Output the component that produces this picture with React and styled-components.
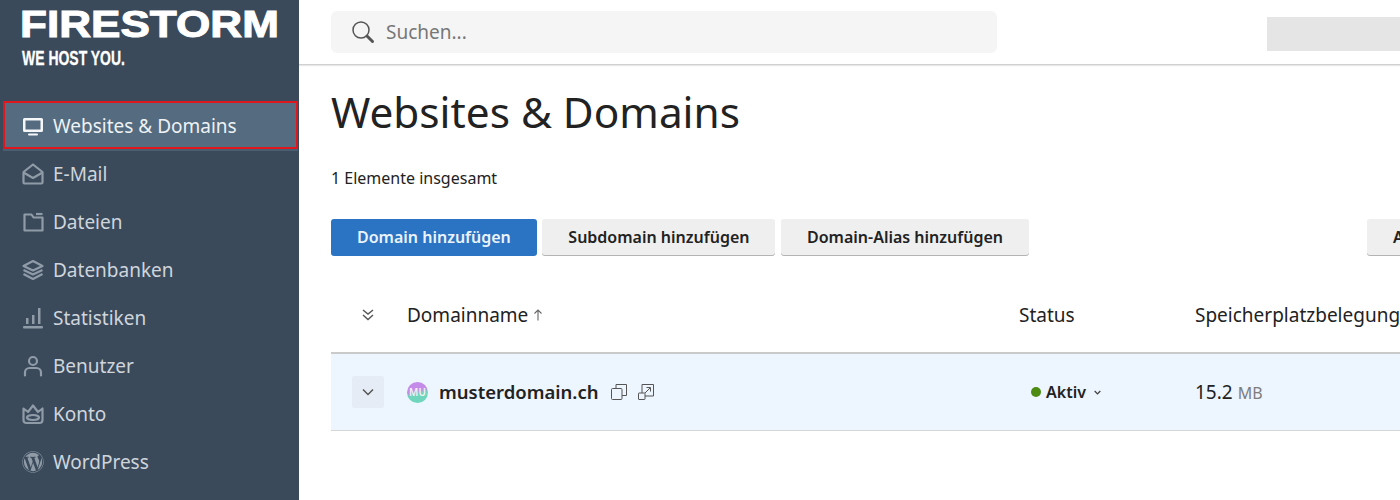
import React from 'react';
import styled, { createGlobalStyle } from 'styled-components';
import { FaWordpress } from 'react-icons/fa';

const GlobalStyle = createGlobalStyle`
  html, body {
    margin: 0;
    padding: 0;
    background: #fff;
  }
  body {
    font-family: 'Noto Sans', 'Open Sans', sans-serif;
    color: #222;
  }
`;

const Page = styled.div`
  display: flex;
  width: 1400px;
  height: 500px;
  overflow: hidden;
`;

const Sidebar = styled.aside`
  flex: 0 0 299px;
  background: #3a4a5b;
`;

const Logo = styled.div`
  height: 101px;
  box-sizing: border-box;
  padding: 4px 0 0 20px;
  color: #fff;
`;

const LogoName = styled.div`
  font-family: 'Liberation Sans', sans-serif;
  font-weight: 700;
  font-size: 36px;
  line-height: 41px;
  white-space: nowrap;
  transform: scaleX(1.225);
  transform-origin: left center;
  -webkit-text-stroke: 1px #fff;
`;

const LogoClaim = styled.div`
  font-family: 'Liberation Sans', sans-serif;
  font-weight: 700;
  font-size: 21px;
  line-height: 24px;
  margin: 1px 0 0 2px;
  white-space: nowrap;
  transform: scaleX(0.665);
  transform-origin: left center;
  -webkit-text-stroke: 0.3px #fff;
`;

const Nav = styled.nav`
  display: flex;
  flex-direction: column;
`;

const NavItem = styled.a`
  display: flex;
  align-items: center;
  gap: 9px;
  height: 48px;
  box-sizing: border-box;
  padding-top: 1px;
  padding-left: ${(props) => (props.$active ? '17px' : '22px')};
  margin: ${(props) => (props.$active ? '0 1px 0 3px' : '0')};
  font-size: 19px;
  color: ${(props) => (props.$active ? '#eef2f5' : '#cfd5db')};
  background: ${(props) => (props.$active ? '#546b80' : 'transparent')};
  border: ${(props) => (props.$active ? '2px solid #e0161e' : 'none')};
  box-shadow: ${(props) => (props.$active ? '0 2px 0 #4a5e72' : 'none')};

  svg {
    flex: 0 0 22px;
    width: 22px;
    height: 22px;
    color: ${(props) => (props.$active ? '#f4f6f8' : '#8f9ba7')};
  }
`;

const Main = styled.main`
  flex: 1;
  min-width: 0;
  overflow: hidden;
`;

const TopBar = styled.header`
  display: flex;
  align-items: center;
  height: 65px;
  box-sizing: border-box;
  padding-left: 32px;
  border-bottom: 1px solid #d0d0d0;
  box-shadow: 0 1px 1px #e8e8e8;
`;

const SearchBox = styled.div`
  display: flex;
  align-items: center;
  gap: 11px;
  flex: 0 0 666px;
  height: 42px;
  box-sizing: border-box;
  padding-left: 20px;
  background: #f5f5f5;
  border-radius: 6px;
  font-size: 19px;
  color: #777;

  svg {
    width: 24px;
    height: 24px;
    color: #555;
  }
`;

const UserPlaceholder = styled.div`
  flex: 0 0 220px;
  height: 34px;
  margin: 4px 0 0 270px;
  background: #e5e5e5;
`;

const Content = styled.div`
  width: 1209px;
  padding: 18px 0 0 32px;
`;

const Title = styled.h1`
  margin: 0;
  font-size: 42.3px;
  line-height: 58px;
  font-weight: 400;
  color: #222;
`;

const Count = styled.p`
  margin: 26px 0 0;
  font-size: 16px;
  line-height: 22px;
  color: #222;
`;

const Toolbar = styled.div`
  display: flex;
  gap: 5.5px;
  margin-top: 30px;
`;

const Button = styled.button`
  height: 37px;
  padding: 0 26px 2px;
  font-family: inherit;
  font-size: 16px;
  font-weight: 600;
  white-space: nowrap;
  border: none;
  border-radius: 3px;
  color: ${(props) => (props.$primary ? '#eaf3fb' : '#222')};
  background: ${(props) => (props.$primary ? '#2b74c4' : '#efefef')};
  box-shadow: ${(props) => (props.$primary ? 'none' : 'inset 0 -1px 0 #b4b4b4')};
  margin-left: ${(props) => (props.$right ? 'auto' : '0')};
`;

const Row = styled.div`
  display: grid;
  grid-template-columns: 76px 612px 176px 1fr;
  align-items: center;
`;

const HeadRow = styled(Row)`
  height: 98px;
  box-sizing: border-box;
  padding-top: 22px;
  border-bottom: 2px solid #cacaca;
  font-size: 19px;
  color: #222;
`;

const DataRow = styled(Row)`
  height: 76px;
  background: #edf5fe;
  border-bottom: 1px solid #d6d6d6;
`;

const ExpandAll = styled.div`
  display: flex;
  justify-content: center;
  width: 32px;
  margin-left: 21px;
  color: #555;

  svg {
    width: 16px;
    height: 16px;
  }
`;

const ExpandButton = styled(ExpandAll)`
  align-items: center;
  height: 32px;
  background: #e5ecf5;
  border-radius: 2px;
`;

const HeadCell = styled.div`
  display: flex;
  align-items: center;
  gap: 5px;
  white-space: nowrap;

  svg {
    width: 10px;
    height: 12px;
    color: #666;
  }
`;

const DomainCell = styled.div`
  display: flex;
  align-items: center;
`;

const Avatar = styled.span`
  display: flex;
  align-items: center;
  justify-content: center;
  width: 21px;
  height: 21px;
  margin-right: 11px;
  border-radius: 50%;
  font-size: 10px;
  font-weight: 600;
  color: #f2f2f2;
  background: linear-gradient(165deg, #c48be9 0 42%, #6fd6bd 58% 100%);
`;

const DomainName = styled.span`
  padding-bottom: 2px;
  font-size: 18.5px;
  font-weight: 600;
  color: #222;
  margin-right: 12px;
`;

const RowIcon = styled.svg`
  width: 16px;
  height: 16px;
  margin-right: 11px;
  color: #555;
`;

const StatusCell = styled.div`
  display: flex;
  align-items: center;
  padding-left: 12px;
  font-size: 16px;
  font-weight: 600;
  color: #222;

  svg {
    width: 9px;
    height: 9px;
    margin-left: 7px;
    color: #444;
    stroke-width: 2.4;
  }
`;

const StatusDot = styled.span`
  width: 10px;
  height: 10px;
  margin-right: 5px;
  border-radius: 50%;
  background: #4c8a12;
`;

const SizeCell = styled.div`
  font-size: 19px;
  color: #222;

  small {
    margin-left: 5px;
    font-size: 16px;
    color: #7d7d7d;
  }
`;

const Monitor = () => (
  <svg viewBox="0 0 22 22">
    <path d="M2.500 3h17A1.500 1.500 0 0 1 21 4.500v11a1.500 1.500 0 0 1-1.500 1.500h-17A1.500 1.500 0 0 1 1 15.500v-11A1.500 1.500 0 0 1 2.500 3zM3.500 5.500v9h15v-9z" fill="currentColor" fillRule="evenodd" />
    <rect x="6" y="18.500" width="10" height="2" rx="1" fill="currentColor" />
  </svg>
);

const Mail = () => (
  <svg viewBox="0 0 22 22" fill="none" stroke="currentColor" strokeWidth="2.200" strokeLinejoin="round">
    <path d="M1.500 9 11 1.500 20.500 9v10.500a1 1 0 0 1-1 1h-17a1 1 0 0 1-1-1z" />
    <path d="M1.500 9.500 11 15l9.500-5.500" />
  </svg>
);

const Folder = () => (
  <svg viewBox="0 0 22 22" fill="none" stroke="currentColor" strokeWidth="2.200">
    <path d="M2.500 3.500v16h18V6.500H11.500l-2-3z" strokeLinejoin="round" />
    <path d="M14 3h6.500" />
  </svg>
);

const Layers = () => (
  <svg viewBox="0 0 22 22" fill="none" stroke="currentColor" strokeWidth="2.200" strokeLinejoin="round">
    <path d="M11 2 20.500 7 11 11.500 1.500 7z" />
    <path d="M1.500 11 11 15.500 20.500 11" />
    <path d="M1.500 15 11 20l9.500-5" />
  </svg>
);

const Bars = () => (
  <svg viewBox="0 0 22 22" fill="currentColor">
    <rect x="1" y="19" width="20" height="2.500" rx="1" />
    <rect x="4" y="11" width="2.500" height="6" />
    <rect x="10" y="8" width="2.500" height="9" />
    <rect x="16" y="1" width="2.500" height="16" />
  </svg>
);

const User = () => (
  <svg viewBox="0 0 22 22" fill="none" stroke="currentColor" strokeWidth="2.200" strokeLinecap="round">
    <circle cx="11" cy="6" r="4" />
    <path d="M3 20.500v-3a4.500 4.500 0 0 1 4.500-4.500h7a4.500 4.500 0 0 1 4.500 4.500v3" />
  </svg>
);

const Crown = () => (
  <svg viewBox="0 0 22 22" fill="none" stroke="currentColor" strokeWidth="2.200" strokeLinejoin="round">
    <path d="M1.500 5.500 6 9l5-6.500L16 9l4.500-3.500V17a3 3 0 0 1-3 3h-13a3 3 0 0 1-3-3z" />
    <ellipse cx="11" cy="14.500" rx="6" ry="2.500" />
  </svg>
);

const Search = () => (
  <svg viewBox="0 0 24 24" fill="none" stroke="currentColor">
    <circle cx="10" cy="10" r="8" strokeWidth="1.500" />
    <path d="M16 16l5.500 5.500" strokeWidth="3" strokeLinecap="round" />
  </svg>
);

const ChevronsDown = () => (
  <svg viewBox="0 0 16 16" fill="none" stroke="currentColor" strokeWidth="1.400">
    <path d="M3 3l5 4 5-4" />
    <path d="M3 8l5 4.500L13 8" />
  </svg>
);

const ChevronDown = () => (
  <svg viewBox="0 0 16 16" fill="none" stroke="currentColor" strokeWidth="1.500">
    <path d="M3 5.500 8 10.500 13 5.500" />
  </svg>
);

const ArrowUp = () => (
  <svg viewBox="0 0 10 12" fill="none" stroke="currentColor" strokeWidth="1.100">
    <path d="M5 11.500V1M1.500 4.500 5 1l3.500 3.500" />
  </svg>
);

const navItems = [
  { label: 'Websites & Domains', icon: <Monitor />, active: true },
  { label: 'E-Mail', icon: <Mail /> },
  { label: 'Dateien', icon: <Folder /> },
  { label: 'Datenbanken', icon: <Layers /> },
  { label: 'Statistiken', icon: <Bars /> },
  { label: 'Benutzer', icon: <User /> },
  { label: 'Konto', icon: <Crown /> },
  { label: 'WordPress', icon: <FaWordpress /> },
];

export default function App() {
  return (
    <Page>
      <GlobalStyle />
      <Sidebar>
        <Logo>
          <LogoName>FIRESTORM</LogoName>
          <LogoClaim>WE HOST YOU.</LogoClaim>
        </Logo>
        <Nav>
          {navItems.map((item) => (
            <NavItem key={item.label} $active={item.active}>
              {item.icon}
              {item.label}
            </NavItem>
          ))}
        </Nav>
      </Sidebar>
      <Main>
        <TopBar>
          <SearchBox>
            <Search />
            Suchen...
          </SearchBox>
          <UserPlaceholder />
        </TopBar>
        <Content>
          <Title>Websites &amp; Domains</Title>
          <Count>1 Elemente insgesamt</Count>
          <Toolbar>
            <Button $primary>Domain hinzufügen</Button>
            <Button>Subdomain hinzufügen</Button>
            <Button>Domain-Alias hinzufügen</Button>
            <Button $right>Alle einblenden</Button>
          </Toolbar>
          <HeadRow>
            <ExpandAll>
              <ChevronsDown />
            </ExpandAll>
            <HeadCell>
              Domainname
              <ArrowUp />
            </HeadCell>
            <HeadCell>Status</HeadCell>
            <HeadCell>Speicherplatzbelegung</HeadCell>
          </HeadRow>
          <DataRow>
            <ExpandButton>
              <ChevronDown />
            </ExpandButton>
            <DomainCell>
              <Avatar>MU</Avatar>
              <DomainName>musterdomain.ch</DomainName>
              <RowIcon viewBox="0 0 16 16" fill="none" stroke="currentColor">
                <rect x="0.500" y="4.500" width="10.500" height="11" rx="1" />
                <path d="M5 4.500V.500h10.500v11H11" />
              </RowIcon>
              <RowIcon viewBox="0 0 16 16" fill="none" stroke="currentColor">
                <rect x="0.500" y="9" width="6.500" height="6.500" rx="0.500" />
                <path d="M4 9V.500h11.500V12H7" />
                <path d="M7 9l5-5M8.500 3.500H12.500V7.500" />
              </RowIcon>
            </DomainCell>
            <StatusCell>
              <StatusDot />
              Aktiv
              <ChevronDown />
            </StatusCell>
            <SizeCell>
              15.2<small>MB</small>
            </SizeCell>
          </DataRow>
        </Content>
      </Main>
    </Page>
  );
}
